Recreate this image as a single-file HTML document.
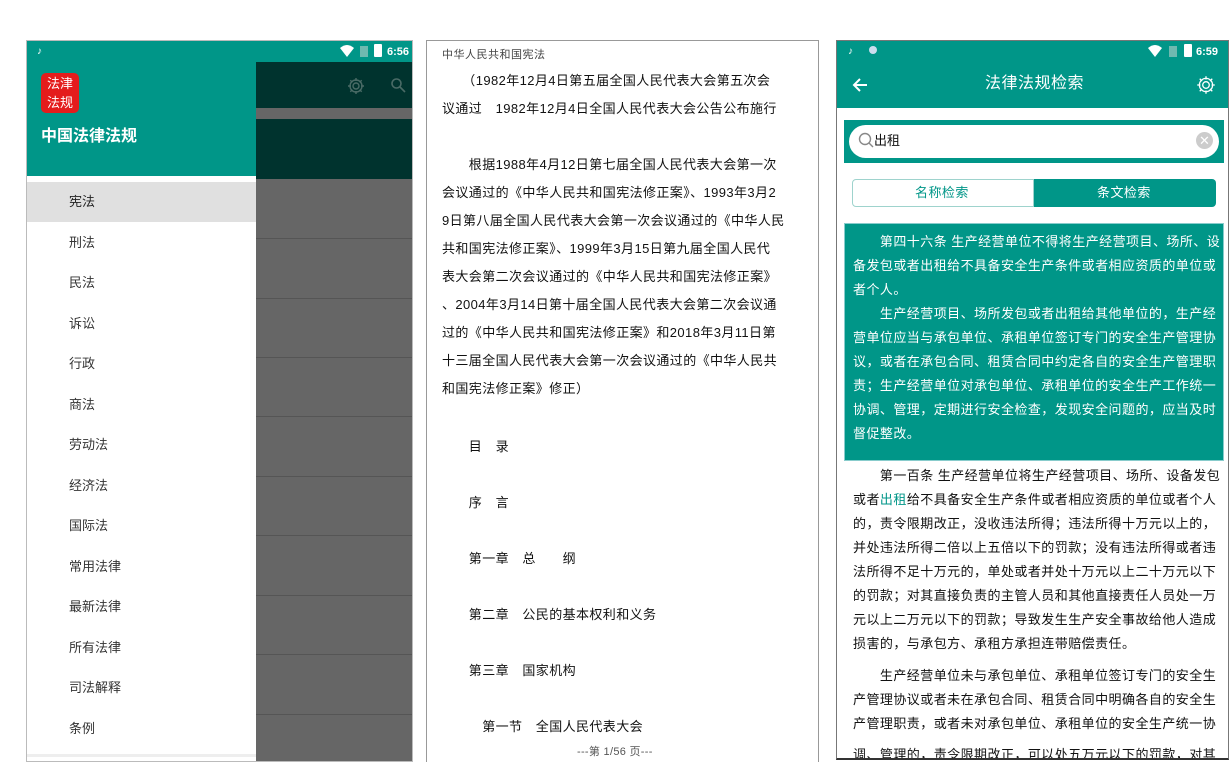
<!DOCTYPE html>
<html><head><meta charset="utf-8"><style>
*{margin:0;padding:0;box-sizing:border-box}
body{width:1230px;height:768px;background:#fff;position:relative;overflow:hidden;font-family:"Liberation Sans","Noto Sans CJK SC",sans-serif}
.a{position:absolute}
.l{position:absolute;white-space:nowrap;line-height:16px}
.p{position:absolute;overflow:hidden}
.mid .l{font-size:13px;letter-spacing:0.4px;color:#111;left:15px}
.rt .l{font-size:13px;letter-spacing:0.45px;left:16px}
.menu .l{font-size:13px;color:#333;left:42px}
</style></head><body>

<!-- LEFT PHONE -->
<div class="p" style="left:26px;top:40px;width:387px;height:722px;border:1px solid #bbb;background:#fff">
 <div class="a" style="left:0;top:0;width:387px;height:21px;background:#009688"></div>
 <div class="l" style="left:10px;top:3px;color:#fff;font-size:10px">♪</div>
 <svg class="a" style="left:313px;top:4px" width="14" height="12" viewBox="0 0 14 12"><path d="M0 3Q7-3 14 3L7 12Z" fill="#fff"/></svg>
 <div class="a" style="left:333px;top:5px;width:8px;height:11px;background:#6fb9b0"></div>
 <div class="a" style="left:347px;top:3px;width:8px;height:13px;background:#fff;border-radius:1px"></div>
 <div class="l" style="left:360px;top:3px;color:#fff;font-size:11px;font-weight:bold">6:56</div>
 <div class="a" style="left:0;top:21px;width:229px;height:114px;background:#009688"></div>
 <div class="a" style="left:14px;top:32px;width:38px;height:40px;background:#e41c1c;border-radius:5px;color:#fff;font-size:13px;line-height:19px;text-align:center;padding-top:1px">法津<br>法规</div>
 <div class="l" style="left:14px;top:88px;color:#fff;font-size:16px;font-weight:bold">中国法律法规</div>
 <div class="a" style="left:0;top:135px;width:229px;height:6px;background:#fff"></div>
 <div class="a" style="left:0;top:141px;width:229px;height:40px;background:#e0e0e0"></div>
 <div class="menu">
  <div class="l" style="top:153px;color:#222">宪法</div>
  <div class="l" style="top:194px">刑法</div>
  <div class="l" style="top:234px">民法</div>
  <div class="l" style="top:275px">诉讼</div>
  <div class="l" style="top:315px">行政</div>
  <div class="l" style="top:356px">商法</div>
  <div class="l" style="top:396px">劳动法</div>
  <div class="l" style="top:437px">经济法</div>
  <div class="l" style="top:477px">国际法</div>
  <div class="l" style="top:518px">常用法律</div>
  <div class="l" style="top:558px">最新法律</div>
  <div class="l" style="top:599px">所有法律</div>
  <div class="l" style="top:639px">司法解释</div>
  <div class="l" style="top:680px">条例</div>
 </div>
 <div class="a" style="left:0;top:713px;width:229px;height:3px;background:#eee"></div>
 <div class="a" style="left:229px;top:21px;width:158px;height:701px;background:#666"></div>
 <div class="a" style="left:229px;top:21px;width:158px;height:46px;background:#00332e"></div>
 <div class="a" style="left:229px;top:78px;width:158px;height:60px;background:#00332e"></div>
 <svg class="a" style="left:319px;top:35px" width="20" height="20" viewBox="0 0 20 20" fill="none" stroke="#4a6b66" stroke-width="1.4"><circle cx="10" cy="10" r="3"/><path d="M10 2v3M10 15v3M2 10h3M15 10h3M4.3 4.3l2.1 2.1M13.6 13.6l2.1 2.1M4.3 15.7l2.1-2.1M13.6 6.4l2.1-2.1"/><circle cx="10" cy="10" r="6"/></svg>
 <svg class="a" style="left:363px;top:36px" width="16" height="16" viewBox="0 0 16 16" fill="none" stroke="#4a6b66" stroke-width="1.6"><circle cx="6.5" cy="6.5" r="4.5"/><path d="M10 10l5 5"/></svg>
 <div class="a" style="left:229px;top:197px;width:158px;height:1px;background:#555"></div>
 <div class="a" style="left:229px;top:257px;width:158px;height:1px;background:#555"></div>
 <div class="a" style="left:229px;top:316px;width:158px;height:1px;background:#555"></div>
 <div class="a" style="left:229px;top:375px;width:158px;height:1px;background:#555"></div>
 <div class="a" style="left:229px;top:435px;width:158px;height:1px;background:#555"></div>
 <div class="a" style="left:229px;top:494px;width:158px;height:1px;background:#555"></div>
 <div class="a" style="left:229px;top:554px;width:158px;height:1px;background:#555"></div>
 <div class="a" style="left:229px;top:613px;width:158px;height:1px;background:#555"></div>
 <div class="a" style="left:229px;top:673px;width:158px;height:1px;background:#555"></div>
</div>

<!-- MIDDLE PHONE -->
<div class="p mid" style="left:426px;top:40px;width:393px;height:722px;border:1px solid #999;border-bottom:none;background:#fff">
 <div class="l" style="left:15px;top:6px;font-size:11px;color:#444;letter-spacing:0.5px">中华人民共和国宪法</div>
 <div class="l" style="top:32px">　　（1982年12月4日第五届全国人民代表大会第五次会</div>
 <div class="l" style="top:60px">议通过　1982年12月4日全国人民代表大会公告公布施行</div>
 <div class="l" style="top:116px">　　根据1988年4月12日第七届全国人民代表大会第一次</div>
 <div class="l" style="top:144px">会议通过的《中华人民共和国宪法修正案》、1993年3月2</div>
 <div class="l" style="top:172px">9日第八届全国人民代表大会第一次会议通过的《中华人民</div>
 <div class="l" style="top:200px">共和国宪法修正案》、1999年3月15日第九届全国人民代</div>
 <div class="l" style="top:228px">表大会第二次会议通过的《中华人民共和国宪法修正案》</div>
 <div class="l" style="top:256px">、2004年3月14日第十届全国人民代表大会第二次会议通</div>
 <div class="l" style="top:284px">过的《中华人民共和国宪法修正案》和2018年3月11日第</div>
 <div class="l" style="top:312px">十三届全国人民代表大会第一次会议通过的《中华人民共</div>
 <div class="l" style="top:340px">和国宪法修正案》修正）</div>
 <div class="l" style="top:398px">　　目　录</div>
 <div class="l" style="top:454px">　　序　言</div>
 <div class="l" style="top:510px">　　第一章　总　　纲</div>
 <div class="l" style="top:566px">　　第二章　公民的基本权利和义务</div>
 <div class="l" style="top:622px">　　第三章　国家机构</div>
 <div class="l" style="top:678px">　　　第一节　全国人民代表大会</div>
 <div class="l" style="left:150px;top:703px;font-size:11px;color:#555;letter-spacing:0.3px">---第 1/56 页---</div>
</div>

<!-- RIGHT PHONE -->
<div class="p rt" style="left:836px;top:40px;width:393px;height:720px;border:1px solid #777;border-bottom:2px solid #333;background:#fff">
 <div class="a" style="left:0;top:0;width:394px;height:67px;background:#009688"></div>
 <div class="l" style="left:11px;top:3px;color:#fff;font-size:10px;letter-spacing:0">♪</div>
 <div class="a" style="left:32px;top:5px;width:8px;height:8px;border-radius:50%;background:#cde"></div>
 <svg class="a" style="left:311px;top:4px" width="14" height="12" viewBox="0 0 14 12"><path d="M0 3Q7-3 14 3L7 12Z" fill="#fff"/></svg>
 <div class="a" style="left:332px;top:5px;width:8px;height:11px;background:#6fb9b0"></div>
 <div class="a" style="left:347px;top:3px;width:8px;height:13px;background:#fff;border-radius:1px"></div>
 <div class="l" style="left:359px;top:3px;color:#fff;font-size:11px;font-weight:bold;letter-spacing:0">6:59</div>
 <svg class="a" style="left:15px;top:36px" width="16" height="16" viewBox="0 0 16 16" fill="none" stroke="#fff" stroke-width="2"><path d="M15 8H2M8 2L2 8l6 6"/></svg>
 <div class="l" style="left:148px;top:35px;color:#fff;font-size:16px;letter-spacing:0.5px">法律法规检索</div>
 <svg class="a" style="left:358px;top:33px" width="22" height="22" viewBox="0 0 20 20" fill="none" stroke="#fff" stroke-width="1.2"><circle cx="10" cy="10" r="3"/><path d="M10 2v3M10 15v3M2 10h3M15 10h3M4.3 4.3l2.1 2.1M13.6 13.6l2.1 2.1M4.3 15.7l2.1-2.1M13.6 6.4l2.1-2.1"/><circle cx="10" cy="10" r="6"/></svg>
 <div class="a" style="left:7px;top:79px;width:380px;height:43px;background:#009688"></div>
 <div class="a" style="left:12px;top:84px;width:370px;height:33px;background:#fff;border-radius:17px"></div>
 <svg class="a" style="left:21px;top:91px" width="16" height="16" viewBox="0 0 16 16" fill="none" stroke="#888" stroke-width="1.4"><circle cx="7" cy="7" r="5.5"/><path d="M11 11l4 4"/></svg>
 <div class="l" style="left:37px;top:92px;font-size:13px;color:#111;letter-spacing:0">出租</div>
 <div class="a" style="left:359px;top:91px;width:17px;height:17px;border-radius:50%;background:#ccc;color:#fff;font-size:13px;line-height:17px;text-align:center">✕</div>
 <div class="a" style="left:15px;top:138px;width:182px;height:28px;border:1px solid #9ed3cd;border-radius:4px 0 0 4px;background:#fff"></div>
 <div class="l" style="left:78px;top:144px;color:#009688;font-size:13px">名称检索</div>
 <div class="a" style="left:197px;top:138px;width:182px;height:28px;background:#009688;border-radius:0 4px 4px 0"></div>
 <div class="l" style="left:260px;top:144px;color:#fff;font-size:13px">条文检索</div>
 <div class="a" style="left:7px;top:182px;width:380px;height:238px;background:#009688;border:1px solid #8cc"></div>
 <div style="color:#fff">
  <div class="l" style="top:193px">　　第四十六条 生产经营单位不得将生产经营项目、场所、设</div>
  <div class="l" style="top:217px">备发包或者出租给不具备安全生产条件或者相应资质的单位或</div>
  <div class="l" style="top:241px">者个人。</div>
  <div class="l" style="top:265px">　　生产经营项目、场所发包或者出租给其他单位的，生产经</div>
  <div class="l" style="top:289px">营单位应当与承包单位、承租单位签订专门的安全生产管理协</div>
  <div class="l" style="top:313px">议，或者在承包合同、租赁合同中约定各自的安全生产管理职</div>
  <div class="l" style="top:337px">责；生产经营单位对承包单位、承租单位的安全生产工作统一</div>
  <div class="l" style="top:361px">协调、管理，定期进行安全检查，发现安全问题的，应当及时</div>
  <div class="l" style="top:385px">督促整改。</div>
 </div>
 <div style="color:#111">
  <div class="l" style="top:427px">　　第一百条 生产经营单位将生产经营项目、场所、设备发包</div>
  <div class="l" style="top:451px">或者<span style="color:#009688">出租</span>给不具备安全生产条件或者相应资质的单位或者个人</div>
  <div class="l" style="top:475px">的，责令限期改正，没收违法所得；违法所得十万元以上的，</div>
  <div class="l" style="top:499px">并处违法所得二倍以上五倍以下的罚款；没有违法所得或者违</div>
  <div class="l" style="top:523px">法所得不足十万元的，单处或者并处十万元以上二十万元以下</div>
  <div class="l" style="top:547px">的罚款；对其直接负责的主管人员和其他直接责任人员处一万</div>
  <div class="l" style="top:571px">元以上二万元以下的罚款；导致发生生产安全事故给他人造成</div>
  <div class="l" style="top:595px">损害的，与承包方、承租方承担连带赔偿责任。</div>
  <div class="l" style="top:627px">　　生产经营单位未与承包单位、承租单位签订专门的安全生</div>
  <div class="l" style="top:651px">产管理协议或者未在承包合同、租赁合同中明确各自的安全生</div>
  <div class="l" style="top:675px">产管理职责，或者未对承包单位、承租单位的安全生产统一协</div>
  <div class="l" style="top:706px">调、管理的，责令限期改正，可以处五万元以下的罚款，对其</div>
 </div>
</div>
</body></html>
